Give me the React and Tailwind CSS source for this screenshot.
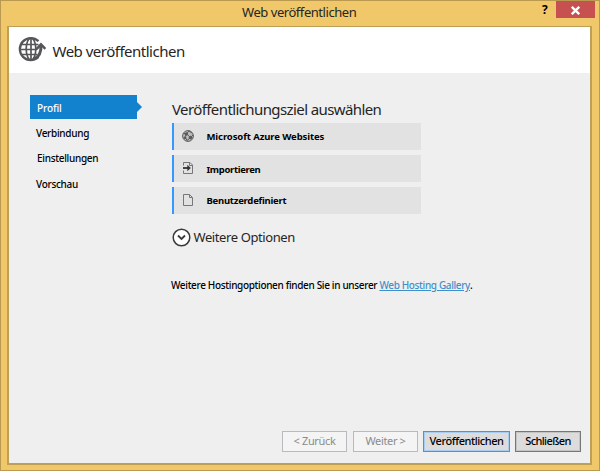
import React from 'react';

function GlobeArrow() {
  return (
    <svg className="h-7 w-7 shrink-0" viewBox="0 0 28 28" fill="none" stroke="#555658" strokeWidth="2.3">
      <path d="M20.500 5.200A11 11 0 1 0 20.500 21" />
      <ellipse cx="13" cy="13" rx="4.800" ry="11" strokeWidth="1.700" />
      <path d="M13 2v22M3.500 8.500h17M2 13.500h17M4 18.500h15" strokeWidth="1.700" />
      <path d="M16 23q7.500-3 7-14" strokeWidth="3" />
      <path d="M18.500 13.200L23 8.300l4.400 4.600" strokeWidth="2.500" />
    </svg>
  );
}

function AzureGlobe() {
  return (
    <svg className="h-3 w-3 shrink-0" viewBox="0 0 12 12" fill="none" stroke="#5a5a5a" strokeWidth="1">
      <circle cx="6" cy="6" r="5.400" fill="#bcbcbc" />
      <path d="M1.500 3.500l3 .2L7 1l3 2M4.500 3.800L3 7l2.200 3.600M4.500 3.800l4 3.700L11 5M5 10.500l3.600-3" />
      <circle cx="4.300" cy="4" r="1.200" fill="#555" />
      <circle cx="8.600" cy="7.600" r="1.300" fill="#555" />
      <circle cx="3" cy="7.800" r=".9" fill="#555" />
    </svg>
  );
}

function ImportPage() {
  return (
    <svg className="h-3 w-3 shrink-0" viewBox="0 0 12 12" fill="none" stroke="#777" strokeWidth="1">
      <path d="M1.500 3.500v-3H8L10.500 3v8.500h-9v-3M7.500.5v3h3" />
      <path d="M1 6h6" stroke="#333" strokeWidth="1.800" />
      <path d="M5.300 2.800l3.500 3.200-3.500 3.200z" fill="#333" stroke="none" />
    </svg>
  );
}

function BlankPage() {
  return (
    <svg className="h-3 w-3 shrink-0" viewBox="0 0 12 12" fill="none" stroke="#777" strokeWidth="1">
      <path d="M1.500.5H7.500L10.500 3.500v8h-9zM7.500.5v3h3" />
    </svg>
  );
}

function Target({ icon, className, children }) {
  return (
    <div className="flex h-[27px] items-center border-l-[2px] border-[#3399ff] bg-[#e2e2e2] pl-[8px]">
      <span className="pb-px">{icon}</span>
      <span className={`ml-[12.5px] pt-[2px] text-[9.5px] font-bold text-black ${className}`}>{children}</span>
    </div>
  );
}

export default function App() {
  return (
    <div className="flex h-[471px] w-[600px] flex-col border border-[#b99a50] bg-[#f0c869] pr-[7px] pb-[5px] pl-[6px] font-['Noto_Sans',sans-serif] whitespace-nowrap text-[#252525]">
      <header className="flex h-[25px] shrink-0 items-start">
        <h1 className="ml-[235px] w-[290px] shrink-0 text-[13px] leading-[23px] tracking-[-0.45px]">Web veröffentlichen</h1>
        <span className="ml-[10px] w-[14px] shrink-0 text-[12px] leading-[18px] font-bold text-black">?</span>
        <button className="-mr-[3px] flex h-[17px] w-[39px] shrink-0 items-center justify-center bg-[#c75050]" aria-label="Schließen">
          <svg className="mt-[2px] h-[9px] w-[9px]" viewBox="0 0 9 9" stroke="white" strokeWidth="2.300">
            <path d="M.8.8l7.400 7.400M8.200.8L.8 8.200" />
          </svg>
        </button>
      </header>
      <main className="flex min-h-0 flex-1 flex-col border-2 border-t border-[#bd9f57] bg-[#efefef]">
        <div className="flex h-[46px] shrink-0 items-center bg-white pl-[9px]">
          <GlobeArrow />
          <h2 className="ml-[6.5px] pt-[2px] text-[15px] leading-5 tracking-[-0.5px]">Web veröffentlichen</h2>
        </div>
        <div className="flex flex-1">
          <nav className="w-[163px] pt-[22px] pl-[21px] text-[10px] font-medium tracking-[-0.3px] text-black">
            <div className="flex h-6 items-center">
              <span className="flex h-6 w-[107px] items-center bg-[#1382ce] pt-[2px] pl-[7px] tracking-[-0.1px] text-white">Profil</span>
              <svg className="h-[10px] w-[5px]" viewBox="0 0 5 10"><path d="M0 0l5 5-5 5z" fill="#1382ce" /></svg>
            </div>
            <div className="mt-[2px] h-[25px] pl-[6px] leading-[25px]">Verbindung</div>
            <div className="h-[26px] pl-[7px] leading-[25px]">Einstellungen</div>
            <div className="h-[25px] pl-[6px] leading-[25px]">Vorschau</div>
          </nav>
          <section className="pt-[25px]">
            <h3 className="h-[25px] text-[15px] leading-[22px] tracking-[-0.6px]">Veröffentlichungsziel auswählen</h3>
            <div className="flex w-[249px] flex-col gap-[5px]">
              <Target icon={<AzureGlobe />} className="tracking-[-0.1px]">Microsoft Azure Websites</Target>
              <Target icon={<ImportPage />} className="translate-y-px tracking-[-0.35px]">Importieren</Target>
              <Target icon={<BlankPage />} className="tracking-[-0.25px]">Benutzerdefiniert</Target>
            </div>
            <div className="mt-[13px] flex h-5 items-center">
              <svg className="h-[19px] w-[19px]" viewBox="0 0 19 19" fill="white" stroke="#3b3b3b">
                <circle cx="9.500" cy="9.500" r="8.300" strokeWidth="1.500" />
                <path d="M6 7.500l3.500 3.500L13 7.500" fill="none" strokeWidth="1.800" />
              </svg>
              <span className="ml-[2.5px] pt-px text-[13px] tracking-[-0.4px]">Weitere Optionen</span>
            </div>
            <p className="mt-[30px] -ml-px text-[10px] leading-[17px] font-medium tracking-[-0.34px] text-black">
              Weitere Hostingoptionen finden Sie in unserer <a className="tracking-[-0.36px] text-[#3f8fcb] underline">Web Hosting Gallery</a>.
            </p>
          </section>
        </div>
        <footer className="mr-[9px] mb-[11px] flex h-[21px] shrink-0 justify-end gap-[5px] text-[11px] tracking-[-0.35px] text-black">
          <button className="mr-px w-[65px] border border-[#b8babf] bg-[#f4f4f4] text-[#8b8b8b]">&lt; Zurück</button>
          <button className="w-[65px] border border-[#b8babf] bg-[#f4f4f4] text-[#8b8b8b]">Weiter &gt;</button>
          <button className="w-[87px] border border-[#3399ff] bg-[#dcdcdc] font-medium tracking-[-0.45px] shadow-[inset_0_0_0_1px_#a9cdf0]">Veröffentlichen</button>
          <button className="w-[66px] border border-[#777] bg-[#dcdcdc] font-medium tracking-[-0.6px] shadow-[inset_0_0_0_1px_#c4c4c4]">Schließen</button>
        </footer>
      </main>
    </div>
  );
}
